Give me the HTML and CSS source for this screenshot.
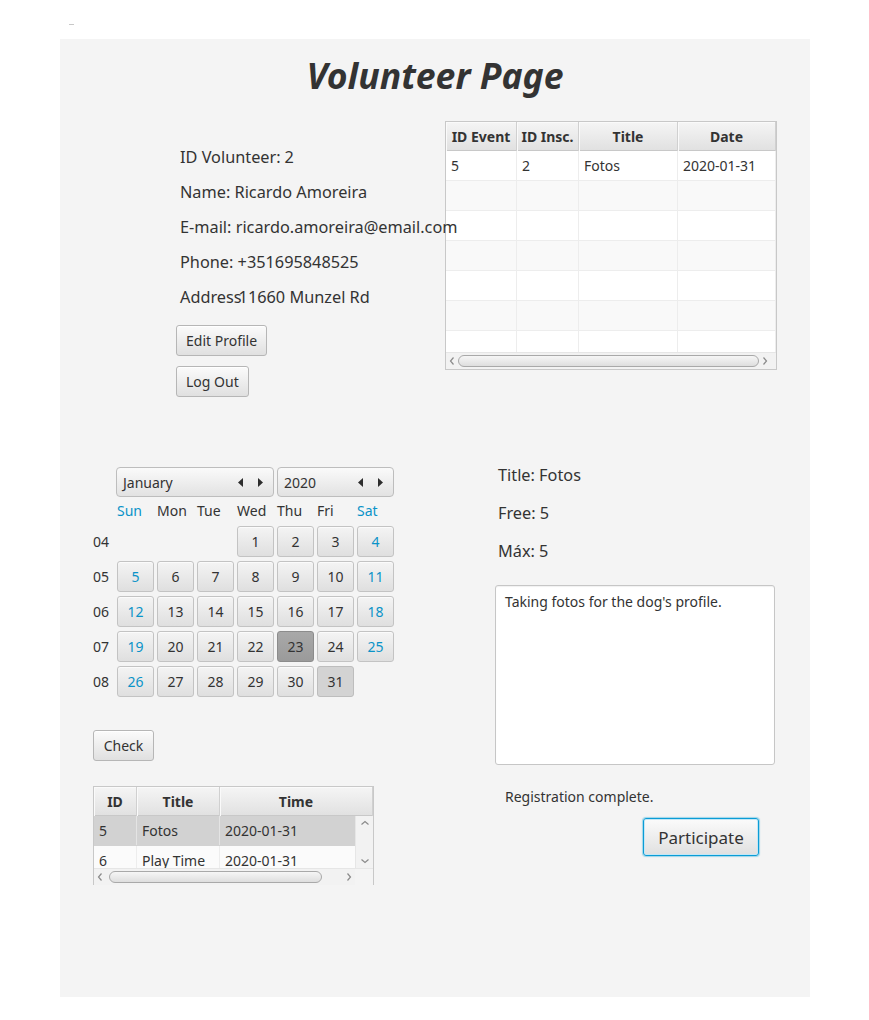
FILE: index.html
```html
<!DOCTYPE html>
<html lang="en">

<head>
    <meta charset="UTF-8">
    <title>Volunteer Page</title>
    <link rel="stylesheet" href="styles.css">
</head>

<body>
    <div class="corner-mark"></div>
    <main class="panel">
        <h1 class="page-title">Volunteer Page</h1>

        <section class="top">
            <div class="profile">
                <div class="field">ID Volunteer:<span class="value">2</span></div>
                <div class="field">Name: <span>Ricardo Amoreira</span></div>
                <div class="field">E-mail: <span>ricardo.amoreira@email.com</span></div>
                <div class="field">Phone: <span>+351695848525</span></div>
                <div class="field">Address<span class="tight">11660 Munzel Rd</span></div>
                <button class="fx-btn profile-btn">Edit Profile</button>
                <button class="fx-btn profile-btn">Log Out</button>
            </div>

            <div class="fx-table events">
                <div class="thead">
                    <div>ID Event</div>
                    <div>ID Insc.</div>
                    <div>Title</div>
                    <div>Date</div>
                </div>
                <div class="tbody">
                    <div class="tr"><div>5</div><div>2</div><div>Fotos</div><div>2020-01-31</div></div>
                    <div class="tr"><div></div><div></div><div></div><div></div></div>
                    <div class="tr"><div></div><div></div><div></div><div></div></div>
                    <div class="tr"><div></div><div></div><div></div><div></div></div>
                    <div class="tr"><div></div><div></div><div></div><div></div></div>
                    <div class="tr"><div></div><div></div><div></div><div></div></div>
                    <div class="tr"><div></div><div></div><div></div><div></div></div>
                </div>
                <div class="hscroll">
                    <svg class="chev" width="8" height="10" viewBox="0 0 8 10"><path d="M5.5 1.5 L2.5 5 L5.5 8.5" /></svg>
                    <div class="thumb"></div>
                    <svg class="chev" width="8" height="10" viewBox="0 0 8 10"><path d="M2.5 1.5 L5.5 5 L2.5 8.5" /></svg>
                </div>
            </div>
        </section>

        <section class="middle">
            <div class="left-col">
                <div class="calendar">
                    <div class="cal-head">
                        <div class="spinner month">
                            <span>January</span>
                            <span class="arrows">
                                <svg width="6" height="9" viewBox="0 0 6 9"><path d="M5 0 L0 4.5 L5 9 Z" /></svg>
                                <svg width="6" height="9" viewBox="0 0 6 9"><path d="M1 0 L6 4.5 L1 9 Z" /></svg>
                            </span>
                        </div>
                        <div class="spinner year">
                            <span>2020</span>
                            <span class="arrows">
                                <svg width="6" height="9" viewBox="0 0 6 9"><path d="M5 0 L0 4.5 L5 9 Z" /></svg>
                                <svg width="6" height="9" viewBox="0 0 6 9"><path d="M1 0 L6 4.5 L1 9 Z" /></svg>
                            </span>
                        </div>
                    </div>
                    <div class="cal-grid">
                        <div></div>
                        <div class="dname weekend">Sun</div>
                        <div class="dname">Mon</div>
                        <div class="dname">Tue</div>
                        <div class="dname">Wed</div>
                        <div class="dname">Thu</div>
                        <div class="dname">Fri</div>
                        <div class="dname weekend">Sat</div>

                        <div class="wk">04</div>
                        <div></div><div></div><div></div>
                        <div class="day">1</div><div class="day">2</div><div class="day">3</div><div class="day weekend">4</div>

                        <div class="wk">05</div>
                        <div class="day weekend">5</div><div class="day">6</div><div class="day">7</div><div class="day">8</div><div class="day">9</div><div class="day">10</div><div class="day weekend">11</div>

                        <div class="wk">06</div>
                        <div class="day weekend">12</div><div class="day">13</div><div class="day">14</div><div class="day">15</div><div class="day">16</div><div class="day">17</div><div class="day weekend">18</div>

                        <div class="wk">07</div>
                        <div class="day weekend">19</div><div class="day">20</div><div class="day">21</div><div class="day">22</div><div class="day today">23</div><div class="day">24</div><div class="day weekend">25</div>

                        <div class="wk">08</div>
                        <div class="day weekend">26</div><div class="day">27</div><div class="day">28</div><div class="day">29</div><div class="day">30</div><div class="day selected">31</div>
                    </div>
                </div>

                <button class="fx-btn check-btn">Check</button>

                <div class="fx-table mine">
                    <div class="thead">
                        <div>ID</div>
                        <div>Title</div>
                        <div>Time</div>
                    </div>
                    <div class="body-wrap">
                        <div class="tbody">
                            <div class="tr picked"><div>5</div><div>Fotos</div><div>2020-01-31</div></div>
                            <div class="tr"><div>6</div><div>Play Time</div><div>2020-01-31</div></div>
                        </div>
                        <div class="vscroll">
                            <svg class="chev" width="10" height="8" viewBox="0 0 10 8"><path d="M1.5 5.5 L5 2.5 L8.5 5.5" /></svg>
                            <svg class="chev" width="10" height="8" viewBox="0 0 10 8"><path d="M1.5 2.5 L5 5.5 L8.5 2.5" /></svg>
                        </div>
                    </div>
                    <div class="hscroll">
                        <svg class="chev" width="8" height="10" viewBox="0 0 8 10"><path d="M5.5 1.5 L2.5 5 L5.5 8.5" /></svg>
                        <div class="thumb"></div>
                        <svg class="chev" width="8" height="10" viewBox="0 0 8 10"><path d="M2.5 1.5 L5.5 5 L2.5 8.5" /></svg>
                        <div class="corner"></div>
                    </div>
                </div>
            </div>

            <div class="right-col">
                <div class="info">Title: Fotos</div>
                <div class="info">Free: 5</div>
                <div class="info">Máx: 5</div>
                <div class="description">Taking fotos for the dog's profile.</div>
                <div class="status">Registration complete.</div>
                <button class="fx-btn participate">Participate</button>
            </div>
        </section>
    </main>
</body>

</html>
```

FILE: styles.css
```css
body {
    margin: 0;
    background: #ffffff;
    font-family: "Noto Sans", "Open Sans", sans-serif;
    color: #333333;
}

.corner-mark {
    width: 5px;
    height: 1px;
    margin: 24px 0 0 69px;
    background: #c8c8c8;
}

.panel {
    width: 750px;
    height: 958px;
    margin: 14px 0 0 60px;
    background: #f4f4f4;
}

.page-title {
    margin: 0;
    height: 82px;
    padding-top: 13px;
    box-sizing: border-box;
    text-align: center;
    font-size: 35.6px;
    line-height: 46px;
    font-style: italic;
    font-weight: bold;
    color: #333333;
}

/* ---------- buttons ---------- */

.fx-btn {
    display: block;
    box-sizing: border-box;
    height: 31px;
    padding: 0 9px;
    font-family: "Noto Sans", sans-serif;
    font-size: 14px;
    color: #333333;
    background: linear-gradient(#fbfbfb, #e0e0e0);
    border: 1px solid #b6b6b6;
    border-radius: 3px;
    box-shadow: inset 0 1px 0 #ffffff;
    cursor: pointer;
}

/* ---------- top section ---------- */

.top {
    display: flex;
    height: 275px;
}

.profile {
    width: 269px;
    margin-left: 116px;
    padding-top: 19px;
    position: relative;
    z-index: 1;
}

.field {
    height: 35px;
    line-height: 35px;
    padding-left: 4px;
    font-size: 16.3px;
    white-space: nowrap;
}

.field .value {
    margin-left: 4px;
}

.field .tight {
    margin-left: -3px;
}

.profile-btn {
    margin-top: 10px;
}

/* ---------- tables ---------- */

.fx-table {
    box-sizing: border-box;
    border: 1px solid #c8c8c8;
    background: #ffffff;
    font-size: 14px;
}

.fx-table .thead {
    display: grid;
    height: 29px;
    background: linear-gradient(#f5f5f5, #e1e1e1);
    border-bottom: 1px solid #c8c8c8;
    box-sizing: border-box;
}

.fx-table .thead div {
    border-right: 1px solid #d0d0d0;
    text-align: center;
    font-weight: bold;
    line-height: 29px;
    box-shadow: inset 1px 1px 0 #fafafa;
}

.fx-table .tr {
    display: grid;
    height: 30px;
    box-sizing: border-box;
    border-bottom: 1px solid #ededed;
}

.fx-table .tr:nth-child(even) {
    background: #f9f9f9;
}

.fx-table .tr div {
    border-right: 1px solid #ededed;
    padding-left: 5px;
    line-height: 29px;
    white-space: nowrap;
    overflow: hidden;
}

.events {
    width: 332px;
    height: 249px;
}

.events .thead,
.events .tr {
    grid-template-columns: 71px 62px 99px 98px;
}

.events .tbody {
    height: 201px;
    overflow: hidden;
}

.hscroll {
    display: flex;
    align-items: center;
    height: 17px;
    background: #f2f2f2;
    border-top: 1px solid #e6e6e6;
    box-sizing: border-box;
}

.chev {
    flex: none;
    fill: none;
    stroke: #8a8a8a;
    stroke-width: 1.2;
}

.hscroll .chev {
    margin: 0 2px;
}

.thumb {
    height: 12px;
    box-sizing: border-box;
    background: linear-gradient(#f6f6f6, #dedede);
    border: 1px solid #a9a9a9;
    border-radius: 6px;
}

.events .thumb {
    width: 301px;
}

/* ---------- middle section ---------- */

.middle {
    display: flex;
    margin-top: 60px;
}

.left-col {
    width: 301px;
    margin-left: 33px;
    padding-top: 11px;
}

.cal-head {
    display: flex;
    gap: 3px;
    margin-left: 23px;
    margin-bottom: 2px;
}

.spinner {
    display: flex;
    align-items: center;
    justify-content: space-between;
    box-sizing: border-box;
    height: 30px;
    padding: 0 10px 0 6px;
    font-size: 14px;
    background: linear-gradient(#fafafa, #e2e2e2);
    border: 1px solid #bdbdbd;
    border-radius: 4px;
}

.spinner.month {
    width: 158px;
}

.spinner.year {
    width: 117px;
}

.arrows {
    display: flex;
    gap: 13px;
}

.arrows svg {
    fill: #2d2d2d;
}

.cal-grid {
    display: grid;
    grid-template-columns: 21px repeat(7, 37px);
    grid-template-rows: 23px repeat(5, 31px);
    column-gap: 3px;
    row-gap: 4px;
    font-size: 14px;
}

.dname {
    line-height: 24px;
}

.weekend {
    color: #0a93c8;
}

.wk {
    line-height: 31px;
}

.day {
    box-sizing: border-box;
    text-align: center;
    line-height: 29px;
    background: linear-gradient(#f4f4f4, #dfdfdf);
    border: 1px solid #c3c3c3;
    border-radius: 3px;
    box-shadow: inset 0 1px 0 #fbfbfb;
}

.day.today {
    background: linear-gradient(#a9a9a9, #9a9a9a);
    border-color: #8c8c8c;
    box-shadow: none;
}

.day.selected {
    background: #d3d3d3;
    border-color: #bdbdbd;
    box-shadow: none;
}

.check-btn {
    margin-top: 33px;
    width: 61px;
    padding: 0;
}

/* small table */

.mine {
    width: 281px;
    height: 99px;
    margin-top: 25px;
}

.mine .thead,
.mine .tr {
    grid-template-columns: 43px 83px 153px;
}

.body-wrap {
    display: flex;
    height: 52px;
}

.mine .tbody {
    width: 261px;
    overflow: hidden;
}

.mine .tr.picked {
    background: #d2d2d2;
    border-bottom-color: #d2d2d2;
}

.mine .tr.picked div {
    border-right-color: #e4e4e4;
}

.mine .tr:nth-child(2) {
    background: #fbfbfb;
}

.vscroll {
    display: flex;
    flex-direction: column;
    justify-content: space-between;
    align-items: center;
    width: 18px;
    padding: 3px 0;
    box-sizing: border-box;
    background: #f2f2f2;
    border-left: 1px solid #e6e6e6;
}

.mine .hscroll .chev:first-child {
    margin-left: 2px;
}

.mine .thumb {
    width: 216px;
    margin-left: 3px;
    margin-right: 21px;
}

.mine .corner {
    width: 18px;
    height: 16px;
    margin-left: auto;
    background: #f4f4f4;
}

/* right column */

.right-col {
    width: 280px;
    margin-left: 101px;
}

.info {
    height: 38px;
    line-height: 38px;
    padding-left: 3px;
    font-size: 16.3px;
}

.description {
    box-sizing: border-box;
    height: 180px;
    margin-top: 15px;
    padding: 6px 9px;
    font-size: 14px;
    background: #ffffff;
    border: 1px solid #c6c6c6;
    border-radius: 3px;
    box-shadow: inset 0 1px 1px rgba(0, 0, 0, 0.06);
}

.status {
    margin-top: 22px;
    padding-left: 10px;
    height: 20px;
    line-height: 20px;
    font-size: 14px;
}

.participate {
    width: 116px;
    height: 38px;
    margin: 11px 0 0 148px;
    padding: 0;
    font-size: 17px;
    border: 1px solid #0a9cd6;
    box-shadow: inset 0 0 0 1px #c3e7f6, 0 0 1px 1px rgba(3, 158, 211, 0.35);
}
```
